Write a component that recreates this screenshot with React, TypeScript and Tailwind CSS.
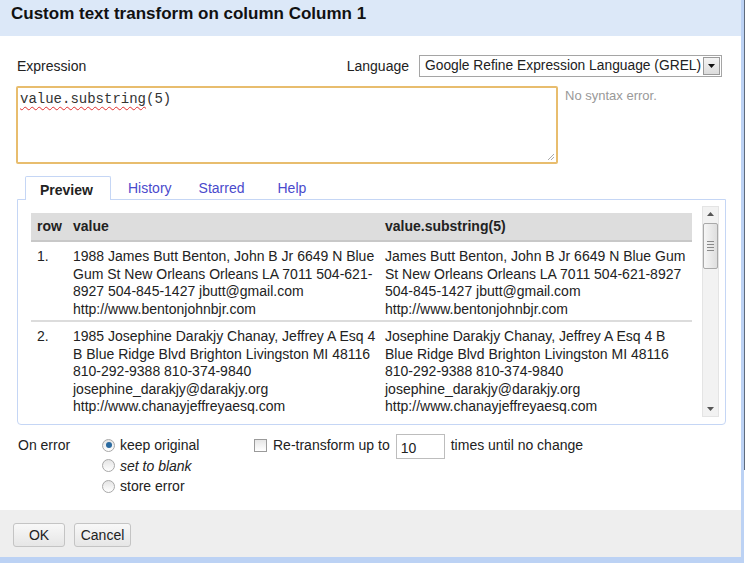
const ROWS = [
  {
    n: "1.",
    value: [
      "1988 James Butt Benton, John B Jr 6649 N Blue",
      "Gum St New Orleans Orleans LA 7011 504-621-",
      "8927 504-845-1427 jbutt@gmail.com",
      "http://www.bentonjohnbjr.com",
    ],
    result: [
      "James Butt Benton, John B Jr 6649 N Blue Gum",
      "St New Orleans Orleans LA 7011 504-621-8927",
      "504-845-1427 jbutt@gmail.com",
      "http://www.bentonjohnbjr.com",
    ],
  },
  {
    n: "2.",
    value: [
      "1985 Josephine Darakjy Chanay, Jeffrey A Esq 4",
      "B Blue Ridge Blvd Brighton Livingston MI 48116",
      "810-292-9388 810-374-9840",
      "josephine_darakjy@darakjy.org",
      "http://www.chanayjeffreyaesq.com",
    ],
    result: [
      "Josephine Darakjy Chanay, Jeffrey A Esq 4 B",
      "Blue Ridge Blvd Brighton Livingston MI 48116",
      "810-292-9388 810-374-9840",
      "josephine_darakjy@darakjy.org",
      "http://www.chanayjeffreyaesq.com",
    ],
  },
];

function Radio({ checked }: { checked?: boolean }) {
  return (
    <span className="w-[13px] h-[13px] rounded-full border border-[#a8a8a8] bg-gradient-to-b from-[#e4e4e4] to-[#ffffff] flex items-center justify-center shrink-0">
      {checked && <span className="w-[6px] h-[6px] rounded-full bg-[#2a6aa0]" />}
    </span>
  );
}

export default function App() {
  return (
    <div className="flex w-[749px] h-[563px] bg-white font-['Liberation_Sans',Arial,sans-serif] text-[#222] overflow-hidden">
      {/* dialog */}
      <div className="w-[744px] h-[563px] shrink-0 flex flex-col border-r-[3px] border-b-[6px] border-[#bcd2f4] bg-white">
        {/* title */}
        <div className="h-[36px] shrink-0 bg-[#dce8f8] px-[11px] pt-[4px] text-[17px] leading-[20px] font-bold text-[#111]">
          Custom text transform on column Column 1
        </div>

        {/* body */}
        <div className="flex-1 flex flex-col px-[16px] pt-[19px]">
          {/* expression + language */}
          <div className="flex items-center h-[22px] text-[14px]">
            <span className="pl-[1px]">Expression</span>
            <span className="ml-auto mr-[10px]">Language</span>
            <div className="w-[303px] h-[22px] mr-[3px] border border-[#a5a5a5] flex items-center text-[#222]">
              <span className="pl-[5px] flex-1 whitespace-nowrap text-[13.8px]">Google Refine Expression Language (GREL)</span>
              <span className="w-[17px] h-[18px] mr-[1px] shrink-0 border border-[#9a9a9a] bg-gradient-to-b from-[#f4f4f4] to-[#dcdcdc] flex items-center justify-center">
                <svg width="7" height="4" viewBox="0 0 7 4"><path d="M0 0h7L3.5 4z" fill="#111" /></svg>
              </span>
            </div>
          </div>

          {/* textarea row */}
          <div className="flex mt-[9px]">
            <div className="relative w-[542px] h-[78px] border-2 border-[#e8bd6e] rounded-[2px] px-[2px] pt-[2px] text-[14px] leading-[17px]">
              <span className="font-['Liberation_Mono','Courier_New',monospace] text-[14px] text-[#333]">
                <span className="underline decoration-wavy decoration-[#e03030] decoration-1 underline-offset-[3px]">value.substring</span>(5)
              </span>
              <svg className="absolute right-[1px] bottom-[1px]" width="8" height="8" viewBox="0 0 8 8">
                <path d="M7 1L1 7M7 4L4 7" stroke="#aaa" strokeWidth="1" />
              </svg>
            </div>
            <span className="ml-[7px] text-[13px] leading-[20px] text-[#999]">No syntax error.</span>
          </div>

          {/* tabs */}
          <div className="mt-[13px] ml-[1px] w-[709px] flex flex-col">
            <div className="flex items-end h-[23px] text-[14px]">
              <div className="ml-[8px] w-[86px] h-[24px] border border-b-0 border-[#c5d6f5] bg-white rounded-t-[2px] font-bold text-[#222] pl-[14px] pt-[3px] relative z-10">
                Preview
              </div>
              <span className="ml-[17px] pb-[1px] text-[#4a4acc]">History</span>
              <span className="ml-[27px] pb-[1px] text-[#4a4acc]">Starred</span>
              <span className="ml-[33px] pb-[1px] text-[#4a4acc]">Help</span>
            </div>
            <div className="h-[226px] border border-[#c5d6f5] rounded-b-[4px] -mt-[1px] flex pl-[13px] pr-[5px] pt-[6px]">
              <div className="w-[661px] h-[211px] overflow-hidden pt-[7px] text-[14px] leading-[17.5px]">
                <div className="grid grid-cols-[36px_312px_313px] bg-[#dddddd] h-[29px] items-center font-bold border-b-2 border-[#c8c8c8]">
                  <span className="pl-[6px]">row</span>
                  <span className="pl-[6px]">value</span>
                  <span className="pl-[6px]">value.substring(5)</span>
                </div>
                {ROWS.map((r) => (
                  <div key={r.n} className="grid grid-cols-[36px_312px_313px] pt-[6px] pb-[2px] border-b-2 border-[#dcdcdc]">
                    <span className="pl-[6px]">{r.n}</span>
                    <div className="pl-[6px] whitespace-nowrap">
                      {r.value.map((l) => <div key={l}>{l}</div>)}
                    </div>
                    <div className="pl-[6px] whitespace-nowrap">
                      {r.result.map((l) => <div key={l}>{l}</div>)}
                    </div>
                  </div>
                ))}
              </div>
              {/* scrollbar */}
              <div className="ml-[10px] w-[17px] h-[211px] bg-[#f2f2f2] border border-[#e4e4e4] flex flex-col items-center">
                <svg className="mt-[5px]" width="7" height="4" viewBox="0 0 7 4"><path d="M0 4h7L3.5 0z" fill="#555" /></svg>
                <div className="mt-[7px] w-[15px] h-[46px] border border-[#a9a9a9] rounded-[2px] bg-gradient-to-r from-[#f6f6f6] to-[#dedede] flex flex-col items-center justify-center gap-[2px]">
                  <span className="w-[7px] h-px bg-[#8a8a8a]" />
                  <span className="w-[7px] h-px bg-[#8a8a8a]" />
                  <span className="w-[7px] h-px bg-[#8a8a8a]" />
                  <span className="w-[7px] h-px bg-[#8a8a8a]" />
                </div>
                <svg className="mt-auto mb-[5px]" width="7" height="4" viewBox="0 0 7 4"><path d="M0 0h7L3.5 4z" fill="#555" /></svg>
              </div>
            </div>
          </div>

          {/* on error */}
          <div className="flex mt-[9px] text-[14px] leading-[20.5px]">
            <span className="w-[86px] pl-[2px] pt-[1px]">On error</span>
            <div className="flex flex-col w-[152px]">
              <label className="flex items-center gap-[5px] h-[20.5px] mt-[1px]"><Radio checked />keep original</label>
              <label className="flex items-center gap-[5px] h-[20.5px] italic"><Radio />set to blank</label>
              <label className="flex items-center gap-[5px] h-[20.5px]"><Radio />store error</label>
            </div>
            <div className="flex items-start gap-[6px]">
              <span className="mt-[5px] w-[13px] h-[13px] border border-[#9a9a9a] bg-gradient-to-b from-[#e6e6e6] to-white shrink-0" />
              <span className="pt-[1px]">Re-transform up to</span>
              <span className="w-[49px] h-[25px] border border-[#bdbdbd] pl-[4px] pt-[3px] text-[#222]">10</span>
              <span className="pt-[1px]">times until no change</span>
            </div>
          </div>
        </div>

        {/* footer */}
        <div className="h-[47px] shrink-0 bg-[#eeeeee] flex items-start gap-[9px] pl-[13px] pt-[13px] text-[14px]">
          <button className="w-[52px] h-[24px] border border-[#c4c4c4] rounded-[3px] bg-gradient-to-b from-[#f8f8f8] to-[#e6e6e6] text-[#222]">OK</button>
          <button className="w-[57px] h-[24px] border border-[#c4c4c4] rounded-[3px] bg-gradient-to-b from-[#f8f8f8] to-[#e6e6e6] text-[#222]">Cancel</button>
        </div>
      </div>
      <div className="w-px h-[470px] bg-[#5f6b7c] shrink-0" />
    </div>
  );
}
